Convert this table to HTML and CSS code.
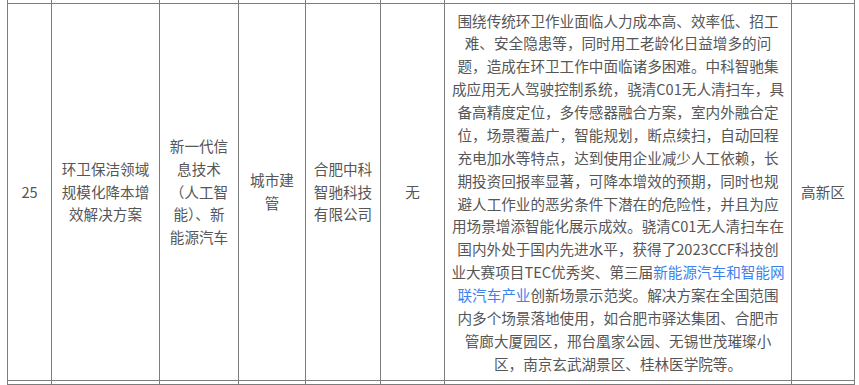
FILE: index.html
```html
<!DOCTYPE html>
<html lang="zh-CN">
<head>
<meta charset="utf-8">
<title>项目表</title>
<link rel="stylesheet" href="styles.css">
</head>
<body>
<table class="grid">
  <colgroup>
    <col class="c-no">
    <col class="c-name">
    <col class="c-field">
    <col class="c-scene">
    <col class="c-org">
    <col class="c-none">
    <col class="c-desc">
    <col class="c-area">
  </colgroup>
  <tbody>
    <tr class="edge-row">
      <td></td><td></td><td></td><td></td><td></td><td></td><td></td><td></td>
    </tr>
    <tr class="main-row">
      <td>25</td>
      <td>环卫保洁领域<br>规模化降本增<br>效解决方案</td>
      <td>新一代信<br>息技术<br>（人工智<br>能）、新<br>能源汽车</td>
      <td>城市建<br>管</td>
      <td>合肥中科<br>智驰科技<br>有限公司</td>
      <td>无</td>
      <td class="desc">围绕传统环卫作业面临人力成本高、效率低、招工<br>难、安全隐患等，同时用工老龄化日益增多的问<br>题，造成在环卫工作中面临诸多困难。中科智驰集<br>成应用无人驾驶控制系统，骁清C01无人清扫车，具<br>备高精度定位，多传感器融合方案，室内外融合定<br>位，场景覆盖广，智能规划，断点续扫，自动回程<br>充电加水等特点，达到使用企业减少人工依赖，长<br>期投资回报率显著，可降本增效的预期，同时也规<br>避人工作业的恶劣条件下潜在的危险性，并且为应<br>用场景增添智能化展示成效。骁清C01无人清扫车在<br>国内外处于国内先进水平，获得了2023CCF科技创<br>业大赛项目TEC优秀奖、第三届<a class="link" href="#">新能源汽车和智能网<br>联汽车产业</a>创新场景示范奖。解决方案在全国范围<br>内多个场景落地使用，如合肥市驿达集团、合肥市<br>管廊大厦园区，邢台凰家公园、无锡世茂璀璨小<br>区，南京玄武湖景区、桂林医学院等。</td>
      <td>高新区</td>
    </tr>
    <tr class="edge-row">
      <td></td><td></td><td></td><td></td><td></td><td></td><td></td><td></td>
    </tr>
  </tbody>
</table>
</body>
</html>
```
FILE: styles.css
```css
html, body {
  margin: 0;
  padding: 0;
  background: #ffffff;
}

body {
  padding-left: 7px;
  font-family: "Noto Sans CJK SC", "Noto Sans", sans-serif;
  font-size: 14.6px;
  line-height: 22.86px;
  color: #565656;
}

.grid {
  border-collapse: separate;
  border-spacing: 0;
  table-layout: fixed;
  width: 848px;
}

.c-no { width: 45px; }
.c-name { width: 108px; }
.c-field { width: 79px; }
.c-scene { width: 67px; }
.c-org { width: 75px; }
.c-none { width: 64px; }
.c-desc { width: 347px; }
.c-area { width: 63px; }

.grid td {
  box-sizing: border-box;
  border-right: 1px solid #7d7d7d;
  border-bottom: 1px solid #7d7d7d;
  padding: 0;
  text-align: center;
  vertical-align: middle;
  white-space: nowrap;
}

.grid td:first-child {
  border-left: 1px solid #7d7d7d;
}

.edge-row td {
  height: 4px;
}

.main-row td {
  height: 377px;
}

.main-row td.desc {
  padding-top: 1px;
}

.link {
  color: #3b82f0;
  text-decoration: none;
}
```
